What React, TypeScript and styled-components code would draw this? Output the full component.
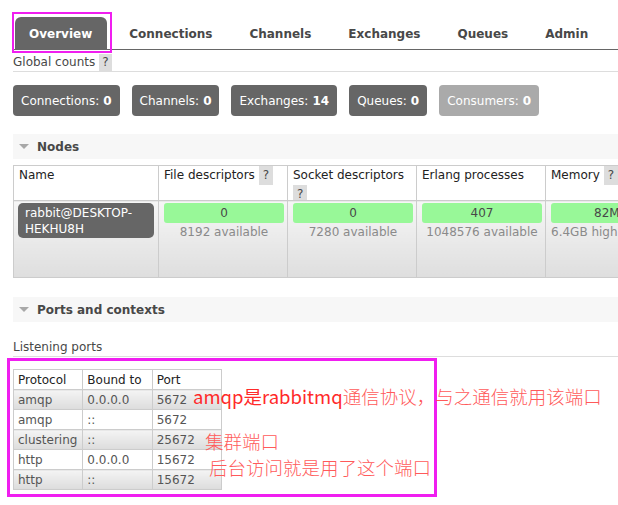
import React from "react";
import styled, { createGlobalStyle } from "styled-components";

const GlobalStyle = createGlobalStyle`
  html, body { margin: 0; padding: 0; background: #fff; overflow: hidden; }
  body {
    font-family: "DejaVu Sans", Verdana, sans-serif;
    font-size: 12px;
    color: #484848;
  }
  * { box-sizing: border-box; }
`;

const Page = styled.div`
  padding-left: 13px;
  width: 618px;
`;

const TabBar = styled.nav`
  display: flex;
  gap: 8px;
  margin-top: 17px;
  height: 33px;
  padding-left: 2px;
  border-bottom: 1px solid #666;
`;

const Tab = styled.div<{ $active?: boolean; $marked?: boolean }>`
  position: relative;
  display: flex;
  align-items: center;
  padding: 1px 15px 0 14px;
  font-weight: bold;
  color: ${(p) => (p.$active ? "#fff" : "#484848")};
  background: ${(p) => (p.$active ? "#666" : "transparent")};
  border-radius: 6px 6px 0 0;
  &::after {
    content: "";
    display: ${(p) => (p.$marked ? "block" : "none")};
    position: absolute;
    left: -3px;
    top: -5px;
    right: -5px;
    bottom: -4px;
    border: 2px solid #f01ef0;
  }
`;

const SubHeading = styled.div<{ $top?: number }>`
  display: flex;
  align-items: flex-end;
  gap: 4px;
  margin-top: ${(p) => p.$top ?? 0}px;
  height: ${(p) => (p.$top ? 18 : 22)}px;
  line-height: 17px;
  border-bottom: 1px solid #ddd;
  color: #484848;
`;

const Help = styled.span<{ $tall?: boolean }>`
  display: inline-block;
  background: #ddd;
  color: #484848;
  padding: 0 ${(p) => (p.$tall ? 4 : 3)}px;
  line-height: ${(p) => (p.$tall ? 19 : 17)}px;
`;

const BadgeRow = styled.div`
  display: flex;
  gap: 12px;
  margin-top: 13px;
`;

const Badge = styled.div<{ $muted?: boolean }>`
  display: flex;
  align-items: center;
  height: 31px;
  padding: 0 8px;
  border-radius: 4px;
  color: #fff;
  background: ${(p) => (p.$muted ? "#aaa" : "#666")};
  b { margin-left: 4px; }
`;

const SectionHeader = styled.div<{ $top: number }>`
  display: flex;
  align-items: center;
  margin-top: ${(p) => p.$top}px;
  height: 25px;
  padding-left: 6px;
  background: #f7f7f7;
  font-weight: bold;
  color: #484848;
`;

const Caret = styled.span`
  width: 0;
  height: 0;
  border-left: 5.5px solid transparent;
  border-right: 5.5px solid transparent;
  border-top: 5px solid #a8a8a8;
  margin-right: 8px;
`;

const NodesTable = styled.table`
  margin-top: 6px;
  border-collapse: collapse;
  table-layout: fixed;
  width: 674px;
  th, td {
    border: 1px solid #ccc;
    vertical-align: top;
    padding: 0 5px;
  }
  th {
    background: #fff;
    font-weight: normal;
    text-align: left;
    color: #222;
  }
  td {
    height: 77px;
    padding-top: 2px;
    background: linear-gradient(to bottom, #f6f6f6, #dedede);
  }
`;

const HeadCell = styled.div`
  height: 34px;
  overflow: hidden;
  line-height: 19px;
`;

const NodeName = styled.div`
  background: #666;
  color: #fff;
  border-radius: 5px;
  height: 35px;
  padding: 2px 7px 1px;
  line-height: 16px;
  margin: 0 -1px;
`;

const Meter = styled.div`
  height: 20px;
  width: 120px;
  border-radius: 3px;
  background: #98f898;
  color: #484848;
  line-height: 20px;
  text-align: center;
`;

const Sub = styled.div`
  width: 120px;
  margin-top: 1px;
  text-align: center;
  color: #8a8a8a;
  white-space: nowrap;
  line-height: 16px;
`;

const PortsArea = styled.div`
  position: relative;
  padding-top: 12px;
  height: 150px;
`;

const PortsTable = styled.table`
  border-collapse: collapse;
  table-layout: fixed;
  width: 209px;
  th, td {
    border: 1px solid #ccc;
    height: 20px;
    padding: 0 4px;
    text-align: left;
    font-weight: normal;
    white-space: nowrap;
  }
  th { color: #222; background: #fff; }
  td { color: #555; }
  tbody tr:nth-child(odd) td {
    background: linear-gradient(to bottom, #f4f4f4, #dcdcdc);
  }
`;

const HighlightBox = styled.div`
  position: absolute;
  left: -6px;
  top: 1px;
  width: 430px;
  height: 139px;
  border: 3px solid #f01ef0;
  pointer-events: none;
`;

const Note = styled.div<{ $left: number; $top: number }>`
  position: absolute;
  left: ${(p) => p.$left}px;
  top: ${(p) => p.$top}px;
  font-family: "Noto Sans CJK SC", "DejaVu Sans", sans-serif;
  font-size: 18.5px;
  line-height: 24px;
  white-space: nowrap;
  color: #ff5a5a;
  font-weight: 300;
`;

const Strong = styled.span`
  color: #ff2a2a;
  font-weight: 400;
`;

const tabs = ["Overview", "Connections", "Channels", "Exchanges", "Queues", "Admin"];

const counts: { label: string; value: string; muted?: boolean }[] = [
  { label: "Connections:", value: "0" },
  { label: "Channels:", value: "0" },
  { label: "Exchanges:", value: "14" },
  { label: "Queues:", value: "0" },
  { label: "Consumers:", value: "0", muted: true },
];

const meters = [
  { value: "0", sub: "8192 available" },
  { value: "0", sub: "7280 available" },
  { value: "407", sub: "1048576 available" },
  { value: "82MB", sub: "6.4GB high watermark" },
];

const ports = [
  ["amqp", "0.0.0.0", "5672"],
  ["amqp", "::", "5672"],
  ["clustering", "::", "25672"],
  ["http", "0.0.0.0", "15672"],
  ["http", "::", "15672"],
];

export default function App() {
  return (
    <Page>
      <GlobalStyle />
      <TabBar>
        {tabs.map((t, i) => (
          <Tab key={t} $active={i === 0} $marked={i === 0}>
            {t}
          </Tab>
        ))}
      </TabBar>

      <SubHeading>
        Global counts <Help>?</Help>
      </SubHeading>

      <BadgeRow>
        {counts.map((c) => (
          <Badge key={c.label} $muted={c.muted}>
            {c.label}
            <b>{c.value}</b>
          </Badge>
        ))}
      </BadgeRow>

      <SectionHeader $top={18}>
        <Caret />
        Nodes
      </SectionHeader>

      <NodesTable>
        <colgroup>
          <col style={{ width: 145 }} />
          <col style={{ width: 129 }} />
          <col style={{ width: 129 }} />
          <col style={{ width: 129 }} />
          <col style={{ width: 142 }} />
        </colgroup>
        <thead>
          <tr>
            <th><HeadCell>Name</HeadCell></th>
            <th><HeadCell>File descriptors <Help $tall>?</Help></HeadCell></th>
            <th><HeadCell>Socket descriptors <Help $tall>?</Help></HeadCell></th>
            <th><HeadCell>Erlang processes</HeadCell></th>
            <th><HeadCell>Memory <Help $tall>?</Help></HeadCell></th>
          </tr>
        </thead>
        <tbody>
          <tr>
            <td>
              <NodeName>rabbit@DESKTOP-<br />HEKHU8H</NodeName>
            </td>
            {meters.map((m, i) => (
              <td key={i}>
                <Meter>{m.value}</Meter>
                <Sub>{m.sub}</Sub>
              </td>
            ))}
          </tr>
        </tbody>
      </NodesTable>

      <SectionHeader $top={19}>
        <Caret />
        Ports and contexts
      </SectionHeader>

      <SubHeading $top={17}>Listening ports</SubHeading>

      <PortsArea>
        <PortsTable>
          <thead>
            <tr>
              <th>Protocol</th>
              <th>Bound to</th>
              <th>Port</th>
            </tr>
          </thead>
          <tbody>
            {ports.map((r, i) => (
              <tr key={i}>
                {r.map((c, j) => (
                  <td key={j}>{c}</td>
                ))}
              </tr>
            ))}
          </tbody>
        </PortsTable>
        <HighlightBox />
        <Note $left={180} $top={27}>
          <Strong>amqp是rabbitmq</Strong>通信协议，与之通信就用该端口
        </Note>
        <Note $left={192} $top={72}>集群端口</Note>
        <Note $left={196} $top={98}>后台访问就是用了这个端口</Note>
      </PortsArea>
    </Page>
  );
}
